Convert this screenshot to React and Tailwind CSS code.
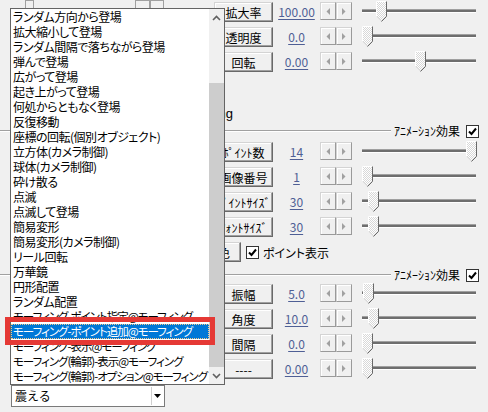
import React, { useId } from "react";

const items = [
  "ランダム方向から登場",
  "拡大縮小して登場",
  "ランダム間隔で落ちながら登場",
  "弾んで登場",
  "広がって登場",
  "起き上がって登場",
  "何処からともなく登場",
  "反復移動",
  "座標の回転(個別オブジェクト)",
  "立方体(カメラ制御)",
  "球体(カメラ制御)",
  "砕け散る",
  "点滅",
  "点滅して登場",
  "簡易変形",
  "簡易変形(カメラ制御)",
  "リール回転",
  "万華鏡",
  "円形配置",
  "ランダム配置",
  "モーフィング-ポイント指定@モーフィング",
  "モーフィング-ポイント追加@モーフィング",
  "モーフィング-表示@モーフィング",
  "モーフィング(輪郭)-表示@モーフィング",
  "モーフィング(輪郭)-オプション@モーフィング",
];

function Btn({ label }) {
  return (
    <div className="w-[59px] h-[20px] shrink-0 bg-[#f0f0f0] border border-t-[#d4d4d4] border-l-[#d4d4d4] border-r-[#696969] border-b-[#696969] shadow-[inset_-1px_-1px_0_#a0a0a0,inset_1px_1px_0_#ffffff] flex items-center justify-center whitespace-nowrap overflow-hidden">
      {label}
    </div>
  );
}

function SpinBtn({ dir }) {
  return (
    <div className="w-[16px] h-[18px] bg-[#f0f0f0] border border-t-[#d4d4d4] border-l-[#d4d4d4] border-r-[#9a9a9a] border-b-[#9a9a9a] shadow-[inset_1px_1px_0_#ffffff] flex items-center justify-center">
      <svg width="4" height="7" viewBox="0 0 4 7">
        {dir === "l" ? (
          <polygon points="4,0 4,7 0.5,3.5" fill="#a0a0a0" />
        ) : (
          <polygon points="0,0 0,7 3.5,3.5" fill="#a0a0a0" />
        )}
      </svg>
    </div>
  );
}

function Slider({ pos }) {
  const id = useId().replace(/:/g, "");
  return (
    <svg width="115" height="22" viewBox="0 0 115 22" className="shrink-0 -mt-[1px]">
      <defs>
        <pattern id={"p" + id} width="2" height="2" patternUnits="userSpaceOnUse">
          <rect width="2" height="2" fill="#ffffff" />
          <rect width="1" height="1" fill="#d8d8d8" />
          <rect x="1" y="1" width="1" height="1" fill="#d8d8d8" />
        </pattern>
      </defs>
      <rect x="0" y="8" width="114" height="1" fill="#a0a0a0" />
      <rect x="0" y="9" width="114" height="2" fill="#6e6e6e" />
      <rect x="0" y="11" width="114" height="1" fill="#ffffff" />
      <g transform={`translate(${pos},0)`}>
        <polygon points="0.5,0.5 10.5,0.5 10.5,15.5 5.5,20.5 0.5,15.5" fill={`url(#p${id})`} />
        <polyline points="0.5,15.5 0.5,0.5 10.5,0.5" fill="none" stroke="#ffffff" />
        <polyline points="0.5,15.5 5.5,20.5" fill="none" stroke="#e3e3e3" />
        <polyline points="10.5,0.5 10.5,15.5 5.5,20.5" fill="none" stroke="#696969" />
      </g>
    </svg>
  );
}

function Row({ label, value, pos, left }) {
  return (
    <div className="flex items-start h-[20px]">
      <div className="w-[214px] shrink-0 h-[20px] relative">{left}</div>
      <Btn label={label} />
      <div className="w-[47px] shrink-0 text-center text-[#4f5f95] underline underline-offset-[2px] leading-[20px]">
        {value}
      </div>
      <div className="flex shrink-0">
        <SpinBtn dir="l" />
        <SpinBtn dir="r" />
      </div>
      <div className="ml-[10px]">
        <Slider pos={pos} />
      </div>
    </div>
  );
}

function Check() {
  return (
    <div className="w-[13px] h-[13px] shrink-0 bg-white border border-[#333333] flex items-center justify-center">
      <svg width="9" height="9" viewBox="0 0 9 9">
        <polyline points="1,4.5 3.5,7 8,1.5" fill="none" stroke="#000" strokeWidth="2" />
      </svg>
    </div>
  );
}

function Header() {
  return (
    <div className="flex items-center h-[14px]">
      <div className="flex-1 h-[2px] border-t border-t-[#a0a0a0] border-b border-b-white" />
      <div className="ml-[3px] text-[12px] leading-[14px] whitespace-nowrap">ｱﾆﾒｰｼｮﾝ効果</div>
      <div className="ml-[6px] mr-[9px]">
        <Check />
      </div>
    </div>
  );
}

function Chevron({ up }) {
  return (
    <svg width="9" height="6" viewBox="0 0 9 6">
      {up ? (
        <polyline points="1,5 4.5,1.5 8,5" fill="none" stroke="#606060" strokeWidth="1.6" />
      ) : (
        <polyline points="1,1 4.5,4.5 8,1" fill="none" stroke="#606060" strokeWidth="1.6" />
      )}
    </svg>
  );
}

export default function App() {
  return (
    <div className="w-[488px] h-[412px] bg-[#f0f0f0] relative overflow-hidden text-black text-[12px] leading-[15px] font-['Noto_Sans_CJK_JP',sans-serif]">
      {/* underlying panel */}
      <div className="flex flex-col pt-[2px]">
        <div className="flex flex-col gap-[5px]">
          <Row
            label="拡大率"
            value="100.00"
            pos={14}
            left={
              <div className="flex h-[12px] -mt-[2px]">
                <div className="ml-[25px] w-[9px] h-[12px] border border-[#a0a0a0]" />
                <div className="ml-[101px] w-[15px] h-[12px] border border-[#a0a0a0]" />
                <div className="w-[14px] h-[12px] border border-[#a0a0a0]" />
              </div>
            }
          />
          <Row label="透明度" value="0.0" pos={0} />
          <Row label="回転" value="0.00" pos={53} />
        </div>
        <div className="mt-[34px] h-[15px] w-[233px] text-right font-['Liberation_Sans',sans-serif] text-[13px]">Morphing</div>
        <div className="mt-[3px]">
          <Header />
        </div>
        <div className="mt-[4px] flex flex-col gap-[5px]">
          <Row label="ﾎﾟｲﾝﾄ数" value="14" pos={104} />
          <Row label="画像番号" value="1" pos={0} />
          <Row label="ﾎﾟｲﾝﾄｻｲｽﾞ" value="30" pos={6} />
          <Row label="ﾌｫﾝﾄｻｲｽﾞ" value="30" pos={6} />
        </div>
        <div className="mt-[5px] flex items-center h-[20px]">
          <div className="ml-[207px] w-[34px] h-[20px] shrink-0 bg-[#f0f0f0] border border-t-[#d4d4d4] border-l-[#d4d4d4] border-r-[#696969] border-b-[#696969] shadow-[inset_-1px_-1px_0_#a0a0a0,inset_1px_1px_0_#ffffff] flex items-center justify-center">
            色
          </div>
          <div className="ml-[5px]">
            <Check />
          </div>
          <div className="ml-[4px] [font-feature-settings:'palt']">ポイント表示</div>
        </div>
        <div className="mt-[6px]">
          <Header />
        </div>
        <div className="mt-[2px] flex flex-col gap-[5px]">
          <Row label="振幅" value="5.0" pos={1} />
          <Row label="角度" value="10.0" pos={6} />
          <Row label="間隔" value="0.0" pos={0} />
          <Row label="----" value="0.00" pos={0} />
        </div>
        <div className="mt-[6px] ml-[11px] w-[154px] h-[22px] bg-white border border-[#7a7a7a] flex items-center">
          <div className="flex-1 pl-[3px] leading-[20px]">震える</div>
          <div className="w-[12px] h-[18px] mr-[1px] bg-white border-l border-[#d0d0d0] flex items-center justify-center">
            <svg width="7" height="4" viewBox="0 0 7 4">
              <polygon points="0,0 7,0 3.5,4" fill="#000" />
            </svg>
          </div>
        </div>
      </div>

      {/* dropdown list */}
      <div className="absolute left-[10px] top-[8px] w-[215px] h-[377px] bg-white border border-[#646464] flex overflow-hidden">
        <div className="flex-1 min-w-0 flex flex-col [font-feature-settings:'palt']">
          {items.map((t, i) => {
            const long = i >= 20;
            if (i === 21) {
              return (
                <div
                  key={i}
                  className="h-[15px] shrink-0 bg-[#0078d7] text-white pl-[1px] border border-dotted border-[#f5c98a] whitespace-nowrap overflow-hidden text-[11.5px] leading-[13px] tracking-[-1px]"
                >
                  {t}
                </div>
              );
            }
            return (
              <div
                key={i}
                className={
                  long
                    ? "h-[15px] shrink-0 pl-[2px] whitespace-nowrap overflow-hidden text-[11.5px] tracking-[-1px]"
                    : "h-[15px] shrink-0 pl-[2px] whitespace-nowrap overflow-hidden tracking-[-0.5px]"
                }
              >
                {t}
              </div>
            );
          })}
        </div>
        <div className="w-[15px] shrink-0 flex flex-col bg-[#f0f0f0]">
          <div className="h-[17px] shrink-0 flex items-center justify-center">
            <Chevron up />
          </div>
          <div className="h-[57px] shrink-0" />
          <div className="h-[284px] shrink-0 bg-[#cdcdcd]" />
          <div className="h-[17px] shrink-0 flex items-center justify-center">
            <Chevron />
          </div>
        </div>
      </div>

      {/* red highlight */}
      <div className="absolute left-[5px] top-[317px] w-[210px] h-[28px] border-[5px] border-[#e53935]" />
    </div>
  );
}
